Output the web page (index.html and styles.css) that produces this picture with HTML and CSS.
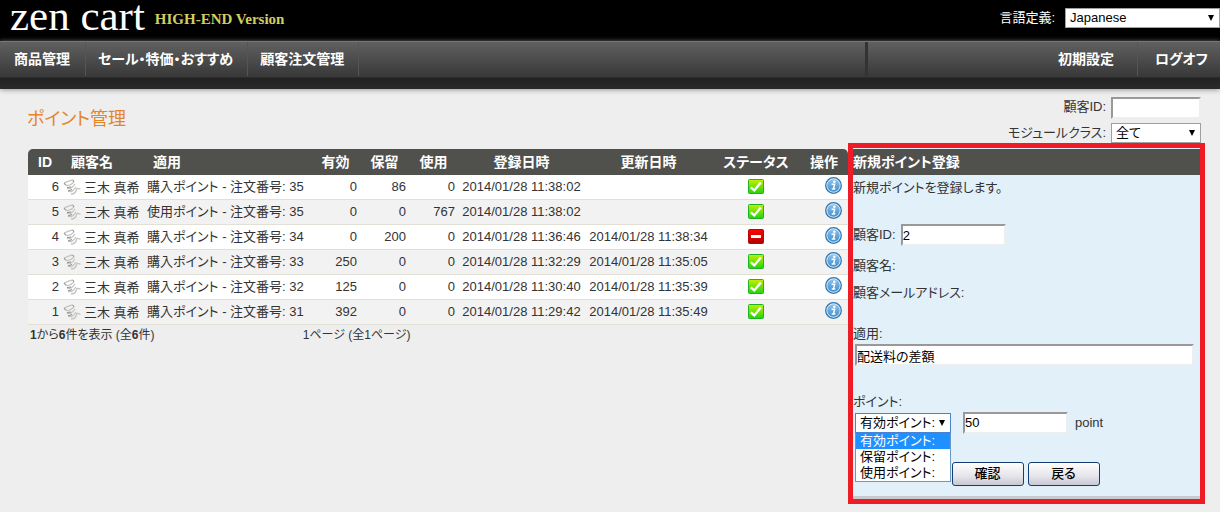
FILE: index.html
```html
<!DOCTYPE html>
<html lang="ja">
<head>
    <meta charset="UTF-8">
    <meta name="viewport" content="width=device-width, initial-scale=1.0">
    <title>ポイント管理</title>
    <link rel="stylesheet" href="styles.css">
</head>
<body>
    <svg class="defs" width="0" height="0" aria-hidden="true">
        <defs>
            <linearGradient id="green" x1="0" y1="0" x2="0" y2="1">
                <stop offset="0" stop-color="#c6f000"/>
                <stop offset="1" stop-color="#1fd411"/>
            </linearGradient>
            <linearGradient id="red" x1="0" y1="0" x2="0" y2="1">
                <stop offset="0" stop-color="#ff0500"/>
                <stop offset="1" stop-color="#b00000"/>
            </linearGradient>
            <linearGradient id="blue" x1="0" y1="0" x2="0" y2="1">
                <stop offset="0" stop-color="#8fc2ea"/>
                <stop offset="1" stop-color="#3f8fd0"/>
            </linearGradient>
            <symbol id="ok" viewBox="0 0 16 15">
                <rect x=".5" y=".5" width="15" height="14" rx="1" fill="url(#green)" stroke="#1db51d"/>
                <path d="M2.8 8.3 6.3 11.4 12.8 3.6" fill="none" stroke="#fff" stroke-width="2.4"/>
            </symbol>
            <symbol id="off" viewBox="0 0 16 15">
                <rect x=".5" y=".5" width="15" height="14" rx="1" fill="url(#red)" stroke="#b50808"/>
                <rect x="3" y="6" width="10" height="3" fill="#fff"/>
            </symbol>
            <symbol id="info" viewBox="0 0 17 17">
                <circle cx="8.5" cy="8.5" r="7.8" fill="#dceaf5" stroke="#2d78b4" stroke-width="1.3"/>
                <circle cx="8.5" cy="8.5" r="6.2" fill="url(#blue)"/>
                <circle cx="9.3" cy="4.7" r="1.3" fill="#fff"/>
                <path d="M6.6 7.3H9.6L8.5 12H10.3M6.7 12.1H8.4" fill="none" stroke="#fff" stroke-width="1.5"/>
            </symbol>
            <symbol id="spring" viewBox="0 0 18 16">
                <path d="M1 4C4 3 6 1.5 10 1M2 5C3 8 8 6 11 3M4 9C6 11 10 8 12 5M5 12C8 14 11 11 13 8M8 15C11 15 13 13 13.500 10.500C14 8.500 15 10 17.500 10" fill="none" stroke="#c4c4c0" stroke-width="1.3"/>
                <path d="M1 4 2.500 6M10 1 11 3M4 8.500 8 8M5 12 9 10.500" fill="none" stroke="#8d8d88" stroke-width="1"/>
            </symbol>
        </defs>
    </svg>

    <header class="top">
        <a class="logo" href="#">
            <span class="logo-name">zen cart</span>
            <span class="logo-version">HIGH-END Version</span>
        </a>
        <form class="language">
            <label for="language">言語定義:</label>
            <span class="select">
                <select id="language"><option>Japanese</option></select>
            </span>
        </form>
    </header>

    <nav class="menu">
        <ul class="menu-left">
            <li><a href="#">商品管理</a></li>
            <li><a href="#">セール・特価・おすすめ</a></li>
            <li><a href="#">顧客注文管理</a></li>
        </ul>
        <ul class="menu-right">
            <li><a href="#">初期設定</a></li>
            <li><a href="#">ログオフ</a></li>
        </ul>
    </nav>

    <div class="page-head">
        <h1>ポイント管理</h1>
        <form class="search">
            <label for="searchId">顧客ID:</label>
            <input type="text" id="searchId">
            <label for="module">モジュールクラス:</label>
            <span class="select">
                <select id="module"><option>全て</option></select>
            </span>
        </form>
    </div>

    <div class="content">
        <main>
            <table class="points">
                <colgroup>
                    <col class="c-id"><col class="c-name"><col><col class="c-num"><col class="c-num"><col class="c-num">
                    <col class="c-date"><col class="c-date"><col class="c-status"><col class="c-action">
                </colgroup>
                <thead>
                    <tr>
                        <th>ID</th><th class="left">顧客名</th><th class="left">適用</th><th>有効</th><th>保留</th><th>使用</th>
                        <th>登録日時</th><th>更新日時</th><th>ステータス</th><th>操作</th>
                    </tr>
                </thead>
                <tbody>
                    <tr>
                        <td class="num">6</td>
                        <td class="name"><svg class="spring"><use href="#spring"/></svg><span>三木 真希</span></td>
                        <td>購入ポイント - 注文番号: 35</td>
                        <td class="num">0</td><td class="num">86</td><td class="num">0</td>
                        <td class="date">2014/01/28 11:38:02</td><td class="date"></td>
                        <td class="status"><svg><use href="#ok"/></svg></td>
                        <td class="action"><a href="#" aria-label="詳細"><svg><use href="#info"/></svg></a></td>
                    </tr>
                    <tr>
                        <td class="num">5</td>
                        <td class="name"><svg class="spring"><use href="#spring"/></svg><span>三木 真希</span></td>
                        <td>使用ポイント - 注文番号: 35</td>
                        <td class="num">0</td><td class="num">0</td><td class="num">767</td>
                        <td class="date">2014/01/28 11:38:02</td><td class="date"></td>
                        <td class="status"><svg><use href="#ok"/></svg></td>
                        <td class="action"><a href="#" aria-label="詳細"><svg><use href="#info"/></svg></a></td>
                    </tr>
                    <tr>
                        <td class="num">4</td>
                        <td class="name"><svg class="spring"><use href="#spring"/></svg><span>三木 真希</span></td>
                        <td>購入ポイント - 注文番号: 34</td>
                        <td class="num">0</td><td class="num">200</td><td class="num">0</td>
                        <td class="date">2014/01/28 11:36:46</td><td class="date">2014/01/28 11:38:34</td>
                        <td class="status"><svg><use href="#off"/></svg></td>
                        <td class="action"><a href="#" aria-label="詳細"><svg><use href="#info"/></svg></a></td>
                    </tr>
                    <tr>
                        <td class="num">3</td>
                        <td class="name"><svg class="spring"><use href="#spring"/></svg><span>三木 真希</span></td>
                        <td>購入ポイント - 注文番号: 33</td>
                        <td class="num">250</td><td class="num">0</td><td class="num">0</td>
                        <td class="date">2014/01/28 11:32:29</td><td class="date">2014/01/28 11:35:05</td>
                        <td class="status"><svg><use href="#ok"/></svg></td>
                        <td class="action"><a href="#" aria-label="詳細"><svg><use href="#info"/></svg></a></td>
                    </tr>
                    <tr>
                        <td class="num">2</td>
                        <td class="name"><svg class="spring"><use href="#spring"/></svg><span>三木 真希</span></td>
                        <td>購入ポイント - 注文番号: 32</td>
                        <td class="num">125</td><td class="num">0</td><td class="num">0</td>
                        <td class="date">2014/01/28 11:30:40</td><td class="date">2014/01/28 11:35:39</td>
                        <td class="status"><svg><use href="#ok"/></svg></td>
                        <td class="action"><a href="#" aria-label="詳細"><svg><use href="#info"/></svg></a></td>
                    </tr>
                    <tr>
                        <td class="num">1</td>
                        <td class="name"><svg class="spring"><use href="#spring"/></svg><span>三木 真希</span></td>
                        <td>購入ポイント - 注文番号: 31</td>
                        <td class="num">392</td><td class="num">0</td><td class="num">0</td>
                        <td class="date">2014/01/28 11:29:42</td><td class="date">2014/01/28 11:35:49</td>
                        <td class="status"><svg><use href="#ok"/></svg></td>
                        <td class="action"><a href="#" aria-label="詳細"><svg><use href="#info"/></svg></a></td>
                    </tr>
                </tbody>
            </table>
            <div class="paging">
                <span><b>1</b>から<b>6</b>件を表示 (全<b>6</b>件)</span>
                <span>1ページ (全1ページ)</span>
            </div>
        </main>

        <aside class="panel">
            <h2>新規ポイント登録</h2>
            <form class="panel-body">
                <p class="intro">新規ポイントを登録します。</p>
                <div class="row">
                    <label for="customerId">顧客ID:</label>
                    <input type="text" id="customerId" class="short" value="2">
                </div>
                <p class="info">顧客名:</p>
                <p class="info">顧客メールアドレス:</p>
                <div class="field">
                    <label for="note">適用:</label>
                    <input type="text" id="note" value="配送料の差額">
                </div>
                <div class="field">
                    <label for="pointType">ポイント:</label>
                    <div class="row point-row">
                        <div class="select open">
                            <select id="pointType"><option>有効ポイント:</option><option>保留ポイント:</option><option>使用ポイント:</option></select>
                            <ul class="options">
                                <li class="selected">有効ポイント:</li>
                                <li>保留ポイント:</li>
                                <li>使用ポイント:</li>
                            </ul>
                        </div>
                        <input type="text" class="short" aria-label="ポイント数" value="50">
                        <span>point</span>
                    </div>
                </div>
                <div class="buttons">
                    <button type="button">確認</button>
                    <button type="button">戻る</button>
                </div>
            </form>
        </aside>
    </div>
</body>
</html>
```
FILE: styles.css
```css
* {
    box-sizing: border-box;
}
body {
    margin: 0;
    background-color: #eee;
    color: #333;
    font-family: "Liberation Sans", "Noto Sans CJK JP", sans-serif;
    font-size: 13px;
    line-height: 20px;
    font-feature-settings: "palt";
}
h1, h2, p, ul {
    margin: 0;
    padding: 0;
}
ul {
    list-style: none;
}
a {
    color: inherit;
    text-decoration: none;
}
.defs {
    position: absolute;
}
input, select, button {
    font: inherit;
    font-feature-settings: inherit;
    color: #000;
    margin: 0;
}
input {
    height: 22px;
    padding: 0;
    background-color: #fff;
    border: 2px solid;
    border-color: #999 #eee #eee #999;
}
select {
    display: block;
    width: 100%;
    height: 20px;
    padding: 0 4px;
    line-height: 18px;
    background-color: #fff;
    border: 1px solid #a0a0a0;
    border-radius: 0;
    appearance: none;
}
.select {
    position: relative;
    display: block;
}
.select::after {
    content: "";
    position: absolute;
    top: 7px;
    right: 6px;
    border: 3px solid transparent;
    border-top: 6px solid #000;
    border-bottom: 0;
    pointer-events: none;
}

/* header */
.top {
    display: flex;
    justify-content: space-between;
    height: 41px;
    background-color: #000;
    color: #fff;
}
.logo {
    display: flex;
    gap: 10px;
    padding-left: 10px;
    font-family: "Liberation Serif", serif;
}
.logo-name {
    font-size: 43px;
    line-height: 32px;
}
.logo-version {
    color: #d0cf62;
    font-size: 15px;
    font-weight: bold;
    line-height: 38px;
}
.language {
    display: flex;
    gap: 10px;
    padding-top: 8px;
}
.language .select {
    width: 155px;
}

/* menu */
.menu {
    display: flex;
    height: 48px;
    background: linear-gradient(#606060, #383838 35px, #222 36px, #2b2b2b 47px);
    border-top: 1px solid #777;
    box-shadow: 0 1px 5px #999;
    color: #fff;
    font-size: 14px;
    font-weight: bold;
}
.menu ul {
    display: flex;
    height: 34px;
}
.menu a {
    display: block;
    line-height: 34px;
}
.menu-left {
    flex: 1;
}
.menu-left li {
    padding: 0 14px 0 12px;
    border-right: 1px solid #555;
}
.menu-left li:first-child {
    padding: 0 15px 0 14px;
}
.menu-right {
    width: 355px;
    justify-content: flex-end;
    border-left: 3px solid #333;
}
.menu-right li {
    padding: 0 12px 0 17px;
}
.menu-right li:first-child {
    padding-right: 23px;
    border-right: 1px solid #555;
}

/* title and search */
.page-head {
    display: flex;
    justify-content: space-between;
    padding: 8px 19px 0 27px;
}
h1 {
    color: #e38528;
    font-size: 18px;
    font-weight: normal;
    line-height: 44px;
}
.search {
    display: grid;
    grid-template-columns: auto 90px;
    column-gap: 5px;
    row-gap: 4px;
    text-align: right;
}
.search input {
    width: 90px;
}

/* list */
.content {
    display: flex;
    align-items: flex-start;
    padding: 0 15px 7px 28px;
}
main {
    flex: 1;
    padding-top: 6px;
}
.points {
    width: 100%;
    table-layout: fixed;
    border-collapse: separate;
    border-spacing: 0;
    white-space: nowrap;
}
.c-id {
    width: 34px;
}
.c-name {
    width: 82px;
}
.c-num {
    width: 49px;
}
.c-date {
    width: 127px;
}
.c-status {
    width: 88px;
}
.c-action {
    width: 48px;
}
th {
    height: 26px;
    padding: 0;
    background-color: #50504d;
    color: #fff;
    font-size: 14px;
}
th:first-child {
    border-top-left-radius: 5px;
}
th:last-child {
    border-top-right-radius: 5px;
}
th.left {
    padding-left: 9px;
    text-align: left;
}
td {
    height: 25px;
    padding: 0 3px;
    background-color: #fff;
    border-bottom: 1px solid #e2e0d4;
}
tbody tr:nth-child(even) td {
    background-color: #f2f2f2;
}
.num {
    text-align: right;
}
.date, .status {
    text-align: center;
}
.name {
    padding: 0 1px;
}
.name span {
    vertical-align: middle;
}
.spring {
    width: 18px;
    height: 16px;
    margin-right: 3px;
    vertical-align: middle;
}
.status {
    padding-bottom: 2px;
}
.status svg {
    display: block;
    width: 16px;
    height: 15px;
    margin: 0 auto;
}
.action {
    padding: 0 6px 4px 0;
}
.action svg {
    display: block;
    width: 17px;
    height: 17px;
    margin-left: auto;
}
.paging {
    display: grid;
    grid-template-columns: 1fr 2fr;
    padding-left: 2px;
    font-size: 12px;
}

/* entry panel */
.panel {
    width: 357px;
    border: 5px solid #ee1c25;
    background-color: #e2f0fa;
}
.panel h2 {
    margin-top: 1px;
    background-color: #50504d;
    color: #fff;
    font-size: 14px;
    line-height: 26px;
}
.panel-body {
    padding-top: 3px;
    border-bottom: 3px solid #c5ccd2;
}
.intro {
    margin-bottom: 26px;
}
.row {
    display: flex;
    align-items: center;
    gap: 5px;
}
.short {
    width: 105px;
}
.info {
    margin-top: 7px;
}
.row + .info {
    margin-top: 10px;
}
.field {
    margin-top: 21px;
}
.field + .field {
    margin-top: 25px;
}
.field label {
    display: block;
}
.field > input {
    width: 339px;
    margin-left: 2px;
}
.point-row {
    padding-left: 2px;
    gap: 7px;
}
.point-row .select {
    width: 96px;
    margin-right: 5px;
}
.point-row select {
    border-color: #4b82cf;
}
.options {
    position: absolute;
    top: 20px;
    left: 0;
    width: 96px;
    background-color: #fff;
    border: 1px solid #6a9ac4;
    border-top: 0;
    color: #000;
    line-height: 16px;
}
.options li {
    padding-left: 4px;
}
.options .selected {
    background-color: #1e90ff;
    color: #fff;
}
.buttons {
    display: flex;
    justify-content: center;
    gap: 4px;
    padding: 28px 2px 10px 0;
}
button {
    width: 72px;
    height: 24px;
    padding: 0;
    background: linear-gradient(#fff, #e4e4ea 60%, #c8c8d4);
    border: 1px solid #163d73;
    border-radius: 3px;
    line-height: 20px;
    font-weight: 500;
}
```
